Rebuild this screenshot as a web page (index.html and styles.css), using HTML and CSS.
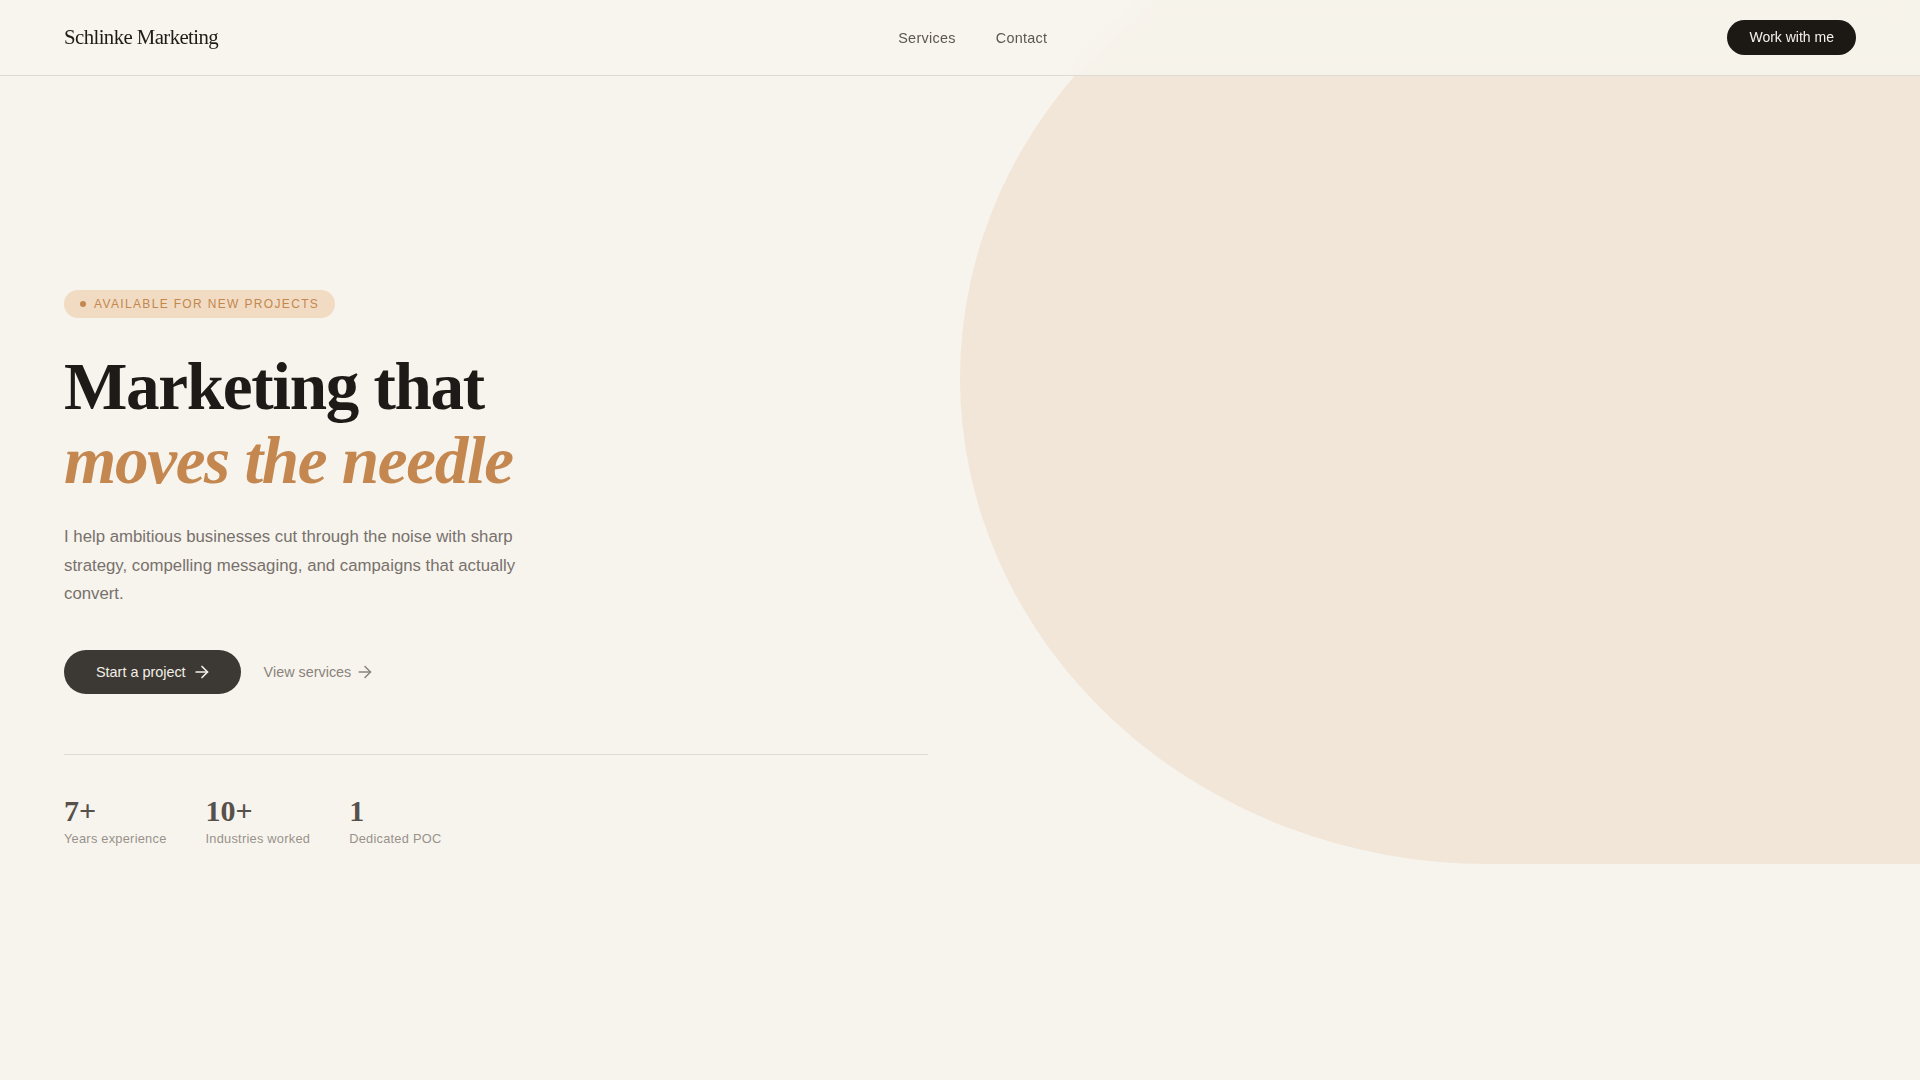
FILE: index.html
```html
<!DOCTYPE html>
<html lang="en">
<head>
<meta charset="utf-8">
<title>Schlinke Marketing</title>
<link rel="stylesheet" href="styles.css">
</head>
<body>
<header class="site-header">
  <a class="logo" href="#">Schlinke Marketing</a>
  <nav class="nav">
    <a href="#">Services</a>
    <a href="#">Contact</a>
  </nav>
  <a class="btn-header" href="#">Work with me</a>
</header>

<section class="hero">
  <div class="hero-shape"></div>
  <div class="hero-content">
    <span class="badge"><span class="badge-dot"></span>AVAILABLE FOR NEW PROJECTS</span>
    <h1 class="hero-title">Marketing that<br><em>moves the needle</em></h1>
    <p class="hero-text">I help ambitious businesses cut through the noise with sharp strategy, compelling messaging, and campaigns that actually convert.</p>
    <div class="hero-actions">
      <a class="btn-primary" href="#">Start a project
        <svg class="arrow" viewBox="0 0 14 14" fill="none" stroke="currentColor" stroke-width="1.7" stroke-linecap="round" stroke-linejoin="round"><path d="M1.2 7h11.3"/><path d="M7 1.5l5.5 5.5-5.5 5.5"/></svg>
      </a>
      <a class="btn-link" href="#">View services
        <svg class="arrow" viewBox="0 0 14 14" fill="none" stroke="currentColor" stroke-width="1.5" stroke-linecap="round" stroke-linejoin="round"><path d="M1.2 7h11.3"/><path d="M7 1.5l5.5 5.5-5.5 5.5"/></svg>
      </a>
    </div>
    <div class="stats">
      <div class="stat">
        <div class="stat-num">7+</div>
        <div class="stat-label">Years experience</div>
      </div>
      <div class="stat">
        <div class="stat-num">10+</div>
        <div class="stat-label">Industries worked</div>
      </div>
      <div class="stat">
        <div class="stat-num">1</div>
        <div class="stat-label">Dedicated POC</div>
      </div>
    </div>
  </div>
  <div class="hero-aside"></div>
</section>
</body>
</html>
```

FILE: styles.css
```css
* { box-sizing: border-box; }

html, body {
  margin: 0;
  padding: 0;
}

body {
  background: #f7f4ee;
  font-family: "Liberation Sans", Arial, sans-serif;
  color: #1f1b18;
  overflow-x: hidden;
}

a { text-decoration: none; color: inherit; }

.site-header {
  position: fixed;
  top: 0;
  left: 0;
  right: 0;
  z-index: 10;
  display: flex;
  align-items: center;
  justify-content: space-between;
  padding: 20px 64px;
  background: rgba(247, 244, 238, 0.86);
  backdrop-filter: blur(10px);
  border-bottom: 1px solid #e0dbd2;
}

.logo {
  font-family: "Liberation Serif", "Times New Roman", serif;
  font-size: 20.8px;
  letter-spacing: -0.028em;
  color: #1f1b18;
  line-height: 1.2;
}

.nav {
  display: flex;
  gap: 40px;
}

.nav a {
  font-size: 14.4px;
  letter-spacing: 0.02em;
  color: #5b5650;
}

.btn-header {
  display: inline-block;
  background: #1c1814;
  color: #f5f1ea;
  font-size: 14px;
  line-height: 17px;
  padding: 9px 22px;
  border-radius: 999px;
}

.hero {
  position: relative;
  min-height: 100vh;
  overflow: hidden;
  display: grid;
  grid-template-columns: 1fr 1fr;
  gap: 64px;
  align-items: center;
  padding: 76px 64px 18px;
}

.hero-shape {
  position: absolute;
  top: -10%;
  right: -5%;
  width: 55%;
  height: 90%;
  background: #f2e6d9;
  border-radius: 50% 0 0 50%;
  z-index: 0;
}

.hero-content {
  position: relative;
  z-index: 1;
}

.badge {
  display: inline-flex;
  align-items: center;
  gap: 8px;
  background: #f1dcc3;
  color: #c4874f;
  font-size: 12px;
  letter-spacing: 0.112em;
  line-height: 18px;
  padding: 5px 16px;
  border-radius: 999px;
}

.badge-dot {
  width: 6px;
  height: 6px;
  border-radius: 50%;
  background: #c4874f;
}

.hero-title {
  margin: 32px 0 0;
  font-family: "Liberation Serif", "Times New Roman", serif;
  font-weight: 700;
  font-size: 67.2px;
  line-height: 1.1;
  letter-spacing: -0.02em;
  color: #1e1a17;
}

.hero-title em {
  font-style: italic;
  color: #c4874f;
}

.hero-text {
  margin: 25px 0 0;
  max-width: 480px;
  font-size: 16.8px;
  line-height: 1.7;
  color: #77716b;
}

.hero-actions {
  margin-top: 41px;
  display: flex;
  align-items: center;
  gap: 23px;
}

.btn-primary {
  display: inline-flex;
  align-items: center;
  gap: 9px;
  height: 44px;
  padding: 0 32px;
  background: #3c3934;
  color: #f3efe8;
  font-size: 14.4px;
  border-radius: 999px;
}

.btn-link {
  display: inline-flex;
  align-items: center;
  gap: 7px;
  font-size: 14.4px;
  color: #8a837c;
}

.arrow {
  width: 14px;
  height: 14px;
}

.stats {
  margin-top: 60px;
  padding-top: 40px;
  border-top: 1px solid #e0dbd2;
  display: flex;
  gap: 39px;
}

.stat-num {
  font-family: "Liberation Serif", "Times New Roman", serif;
  font-weight: 700;
  font-size: 30px;
  line-height: 1.05;
  color: #56514b;
}

.stat-label {
  margin-top: 5px;
  font-size: 12.8px;
  line-height: 1.3;
  letter-spacing: 0.02em;
  color: #98928b;
}
```
